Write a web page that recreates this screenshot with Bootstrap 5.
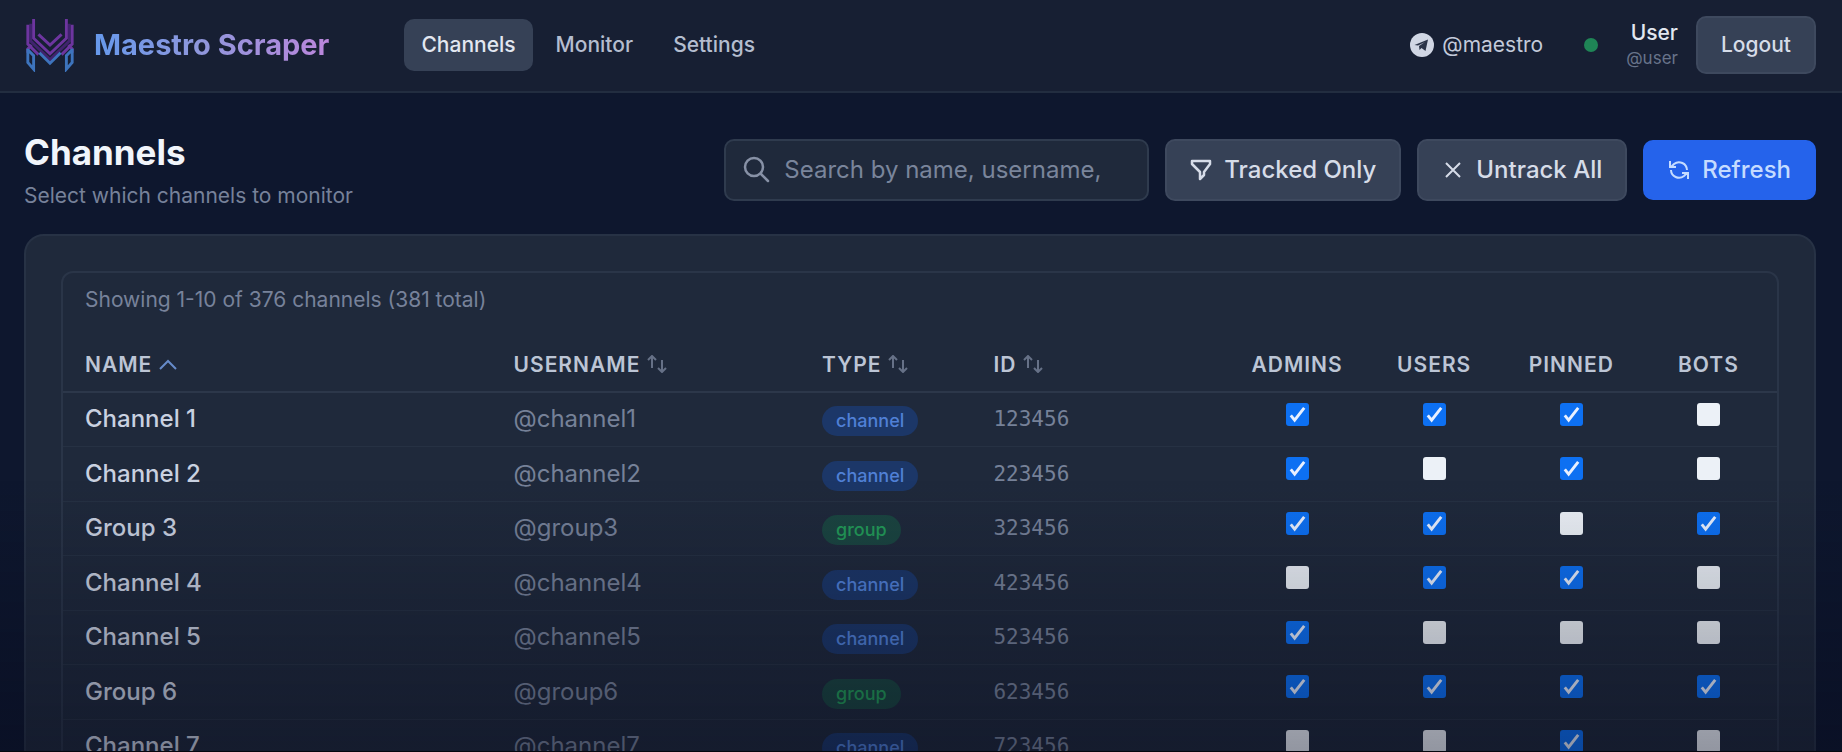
<!DOCTYPE html>
<html lang="en">
<head>
<meta charset="utf-8">
<meta name="viewport" content="width=device-width, initial-scale=1">
<title>Maestro Scraper</title>
<link href="https://cdn.jsdelivr.net/npm/bootstrap@5.3.0/dist/css/bootstrap.min.css" rel="stylesheet">
<style>
body { background: #0e172e; color: #c9d1e0; font-family: Inter, sans-serif; font-size: 24px; line-height: 32px; }
svg { flex: none; }
.topbar { background: #171f33; border-bottom: 2px solid #222d40; padding: 16px 26px 17px 24px; }
.brand-link { gap: 18px; }
.brand-name { font-size: 29px; line-height: 36px; font-weight: 700; color: transparent; background: linear-gradient(90deg, #6699ec, #8f97dc 45%, #bb86dc); background-clip: text; -webkit-background-clip: text; }
.main-nav { gap: 6px; margin-left: 75px; }
.tab-link { font-size: 21px; line-height: 28px; font-weight: 500; color: #b4bdcf; padding: 12px 17px; border-radius: 10px; text-decoration: none; }
.tab-link.active { background: #364156; color: #e2e7f0; }
.account { font-size: 21px; line-height: 26px; color: #c3cada; }
.account-id { margin: 0 18px 0 28px; }
.account-name { font-weight: 500; color: #e2e7f0; }
.account-sub { font-size: 17px; line-height: 24px; color: #68738a; }
.status-dot { width: 14px; height: 14px; margin-left: 41px; background: #1f8556; }
.tool-btn { --bs-btn-font-size: 24px; --bs-btn-font-weight: 500; --bs-btn-line-height: 32px; --bs-btn-padding-x: 23px; --bs-btn-padding-y: 13px; --bs-btn-border-radius: 10px; --bs-btn-border-width: 2px; --bs-btn-color: #d6dce8; --bs-btn-bg: #364156; --bs-btn-border-color: #3e495e; --bs-btn-hover-color: #fff; --bs-btn-hover-bg: #414d63; --bs-btn-hover-border-color: #4a566c; gap: 12px; }
.tool-btn.accent { --bs-btn-color: #c5dcff; --bs-btn-bg: #2563eb; --bs-btn-border-color: #2563eb; --bs-btn-padding-y: 12px; }
.tool-btn.logout { --bs-btn-font-size: 21px; --bs-btn-line-height: 28px; }
.page-head { padding: 13px 0 24px; }
.page-title { font-size: 35px; line-height: 44px; font-weight: 700; color: #f1f5fb; }
.muted-text { font-size: 21px; line-height: 28px; color: #77829a; }
.tools { gap: 16px; }
.search-box { width: 425px; color: #8791a6; }
.search-box .form-control { height: 62px; padding: 0 16px 2px 58px; font-size: 24px; color: #d6dce8; background: #1f293b; border: 2px solid #2f3b4e; border-radius: 10px; }
.search-box .form-control::placeholder { color: #7a859b; opacity: 1; }
.search-box svg { top: 17px; left: 19px; }
.content { padding: 24px 26px 0 24px; }
.panel { background: #1f293b; border: 2px solid #273245; border-radius: 20px; padding: 35px; }
.list-frame { border: 2px solid #2a3548; border-radius: 12px; }
.summary { padding: 13px 22px 24px; }
.channels { table-layout: fixed; color: inherit; }
.channels th, .channels td { padding: 0 22px; vertical-align: middle; white-space: nowrap; }
.channels th { height: 54px; font-size: 21px; font-weight: 600; letter-spacing: 1px; color: #bcc5d5; border-bottom: 2px solid #2c374a; }
.channels td { border-bottom: 1px solid #263143; height: 54px; }
.channels tr:nth-child(even) td { height: 55px; }
.channels th.flag, .channels td.flag { text-align: center; padding: 0; }
.channels td.flag { padding-bottom: 11px; line-height: 24px; }
.channels th svg { vertical-align: -1px; }
.sort-icon { color: #667187; }
.title-cell { font-weight: 500; color: #c9d1e0; }
.handle { color: #768198; }
.code { font-family: "DejaVu Sans Mono", monospace; font-size: 21px; color: #768198; }
.kind { display: inline-block; font-size: 18px; line-height: 22px; font-weight: 500; padding: 4px 14px; border-radius: 15px; vertical-align: middle; margin-top: 4px; color: #5080d6; background: #1c3768; }
.kind.kind-group { color: #239a58; background: #1b4541; }
.pick.form-check-input { width: 23px; height: 23px; margin: 0; vertical-align: middle; border: 0; border-radius: 3px; background-color: #ecf1f7; }
.pick.form-check-input:checked { background-color: #0d70f2; background-image: url("data:image/svg+xml,%3csvg xmlns='http://www.w3.org/2000/svg' viewBox='0 0 24 24'%3e%3cpath d='M5 13l4 5L19 5' fill='none' stroke='%23e8f0ff' stroke-width='3'/%3e%3c/svg%3e"); }
.fade-out { top: 480px; background: linear-gradient(rgba(5,7,25,0), rgba(5,7,25,.39)); border-bottom: 1px solid #05070f; pointer-events: none; }
</style>
</head>
<body class="vh-100 overflow-hidden">
<header class="topbar d-flex align-items-center">
  <a href="#" class="brand-link d-flex align-items-center text-decoration-none">
    <svg width="52" height="54" viewBox="0 0 52 56" fill="none" stroke-width="3">
      <path d="M6 6v18l20 19 20-19V6" stroke="#40236e"/>
      <path d="M3 7v20l11 11M3 36v-4l4-4M9 1v20l17 16 17-16V1M49 7v20L38 38M49 36v-4l-4-4M14 17l12 11 12-11" stroke="#6d359f"/>
      <path d="M3 32v14l6 7V39l-6-6M49 32v14l-6 7V39l6-6M15 36l11 11 11-11" stroke="#3d74bd"/>
    </svg>
    <span class="brand-name">Maestro Scraper</span>
  </a>
  <nav class="main-nav d-flex">
    <a class="tab-link active" href="#" aria-current="page">Channels</a>
    <a class="tab-link" href="#">Monitor</a>
    <a class="tab-link" href="#">Settings</a>
  </nav>
  <div class="d-flex align-items-center ms-auto account">
    <svg width="24" height="24" viewBox="0 0 24 24"><circle cx="12" cy="12" r="12" fill="#d0d6e4"/><path d="M4.500 12L18 6.500 15.500 18l-4-3-2 2-.5-4 6-4-7 3.500z" fill="#2a3348"/></svg>
    <span class="ms-2">@maestro</span>
    <span class="status-dot rounded-circle"></span>
    <div class="account-id text-end">
      <div class="account-name">User</div>
      <div class="account-sub">@user</div>
    </div>
    <button type="button" class="btn tool-btn logout">Logout</button>
  </div>
</header>
<main class="content">
  <div class="page-head d-flex justify-content-between align-items-center">
    <div>
      <h1 class="page-title mb-2">Channels</h1>
      <p class="muted-text mb-0">Select which channels to monitor</p>
    </div>
    <div class="tools d-flex align-items-center">
      <div class="search-box position-relative">
        <svg class="position-absolute" width="27" height="27" viewBox="0 0 27 27" fill="none" stroke="currentColor" stroke-width="2.500" stroke-linecap="round"><circle cx="11" cy="11" r="9"/><path d="M18 18l7 7"/></svg>
        <input type="text" class="form-control" aria-label="Search channels" placeholder="Search by name, username,">
      </div>
      <button type="button" class="btn tool-btn d-flex align-items-center"><svg width="22" height="22" viewBox="0 0 22 22" fill="none" stroke="currentColor" stroke-width="2.500" stroke-linejoin="round"><path d="M2 2h18v3l-6 8v3l-4 4v-7L2 5z"/></svg>Tracked Only</button>
      <button type="button" class="btn tool-btn d-flex align-items-center"><svg width="22" height="22" viewBox="0 0 22 22" fill="none" stroke="currentColor" stroke-width="2"><path d="M4 4l14 14M18 4L4 18"/></svg>Untrack All</button>
      <button type="button" class="btn tool-btn accent d-flex align-items-center"><svg width="22" height="22" viewBox="0 0 22 22" fill="none" stroke="currentColor" stroke-width="2"><path d="M2 2v6h6M3 8l3-3a8 8 0 0 1 13 6M20 20v-6h-6M19 14l-3 3a8 8 0 0 1-13-6"/></svg>Refresh</button>
    </div>
  </div>
  <section class="panel">
    <div class="list-frame">
      <p class="summary muted-text mb-0">Showing 1-10 of 376 channels (381 total)</p>
      <table class="channels w-100">
        <colgroup><col style="width:25%"><col style="width:18%"><col style="width:10%"><col style="width:15%"><col style="width:8%"><col style="width:8%"><col style="width:8%"><col style="width:8%"></colgroup>
        <thead>
          <tr>
            <th scope="col">NAME <svg width="18" height="14" viewBox="0 0 18 14" fill="none" stroke="#668bca" stroke-width="2"><path d="M1 10l8-8 8 8"/></svg></th>
            <th scope="col">USERNAME <svg class="sort-icon" width="20" height="18" viewBox="0 0 20 18" fill="none" stroke="currentColor" stroke-width="2"><path d="M1 5l4-4 4 4M5 1v12M11 13l4 4 4-4M15 17V5"/></svg></th>
            <th scope="col">TYPE <svg class="sort-icon" width="20" height="18" viewBox="0 0 20 18" fill="none" stroke="currentColor" stroke-width="2"><path d="M1 5l4-4 4 4M5 1v12M11 13l4 4 4-4M15 17V5"/></svg></th>
            <th scope="col">ID <svg class="sort-icon" width="20" height="18" viewBox="0 0 20 18" fill="none" stroke="currentColor" stroke-width="2"><path d="M1 5l4-4 4 4M5 1v12M11 13l4 4 4-4M15 17V5"/></svg></th>
            <th scope="col" class="flag">ADMINS</th><th scope="col" class="flag">USERS</th><th scope="col" class="flag">PINNED</th><th scope="col" class="flag">BOTS</th>
          </tr>
        </thead>
        <tbody id="rows"></tbody>
      </table>
    </div>
  </section>
</main>
<div class="fade-out position-fixed start-0 end-0 bottom-0"></div>
<script src="https://cdn.jsdelivr.net/npm/bootstrap@5.3.0/dist/js/bootstrap.bundle.min.js"></script>
<script>
// name, kind, then one digit each for admins, users, pinned, bots
const channels = [
  ['Channel', 'channel', '1110'], ['Channel', 'channel', '1010'], ['Group', 'group', '1101'],
  ['Channel', 'channel', '0110'], ['Channel', 'channel', '1000'], ['Group', 'group', '1111'],
  ['Channel', 'channel', '0010']
];
const flags = ['admins', 'users', 'pinned', 'bots'];
document.getElementById('rows').innerHTML = channels.map(([name, kind, on], i) => {
  const n = i + 1;
  return `<tr><td class="title-cell">${name} ${n}</td><td class="handle">@${kind}${n}</td>
    <td><span class="kind kind-${kind}">${kind}</span></td><td class="code">${n}23456</td>` +
    flags.map((f, j) => `<td class="flag"><input class="form-check-input pick" type="checkbox" aria-label="${name} ${n} ${f}"${on[j] === '1' ? ' checked' : ''}></td>`).join('') + '</tr>';
}).join('');
</script>
</body>
</html>
